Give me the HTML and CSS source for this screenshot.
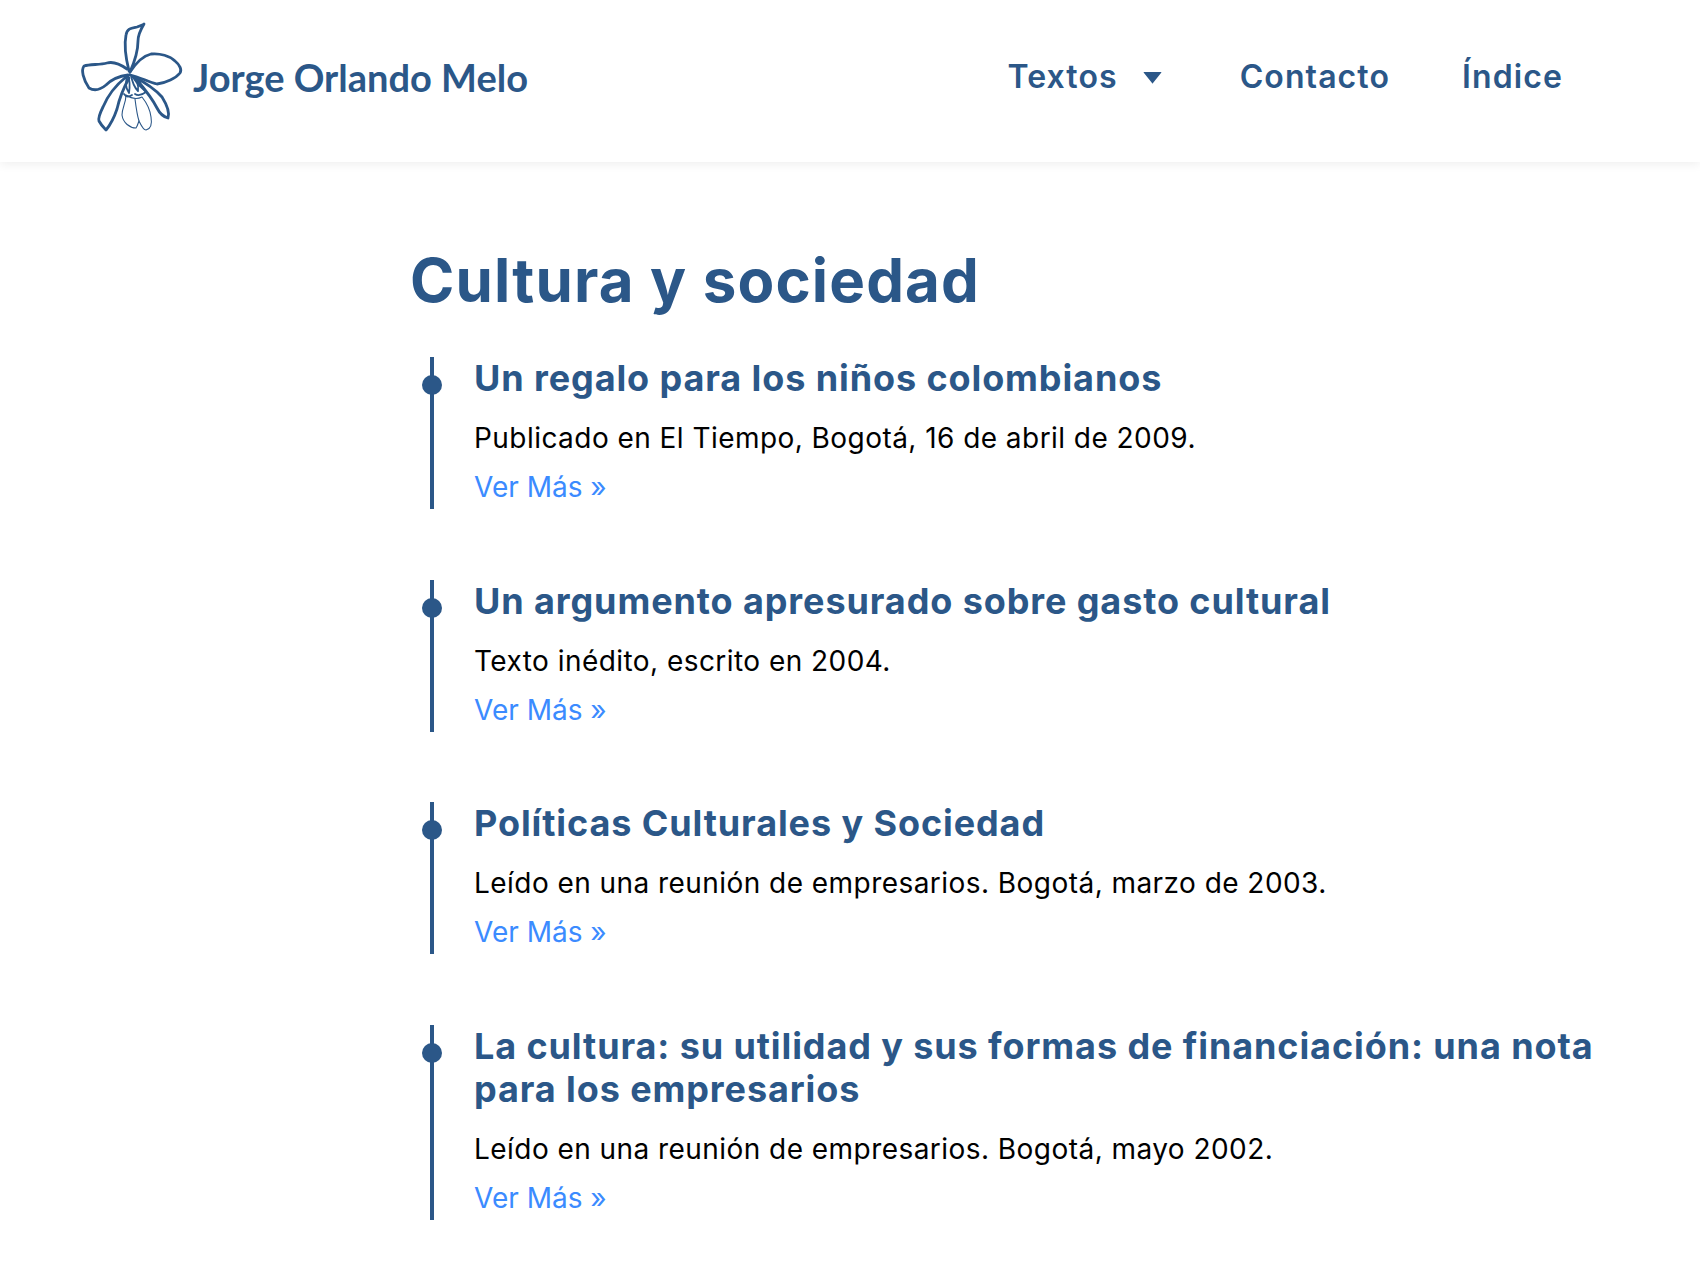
FILE: index.html
```html
<!DOCTYPE html>
<html lang="es">
<head>
<meta charset="utf-8">
<title>Cultura y sociedad</title>
<link rel="stylesheet" href="styles.css">
</head>
<body>
<header class="site-header">
  <a class="brand" href="#">
    <svg class="brand-logo" viewBox="0 0 120 120" fill="none" stroke="#2b5788" stroke-linecap="round" stroke-linejoin="round">
      <g stroke-width="2.8">
        <path d="M59 56C56 44 54 30 56 20C57 13 62 13 67 12C70 11 73 10 74 9C71 14 68 19 68 26C68 38 64 48 60 57"/>
        <path d="M60 57C66 48 72 41 81 39C90 38 100 41 105 46C110 50 112 55 110 58C106 63 96 68 87 69C78 67 70 62 60 60"/>
        <path d="M57 54C50 49 44 46 37 48C30 50 20 49 14 51C11 55 13 64 19 73C24 76 30 75 36 70C42 64 50 61 58 60"/>
        <path d="M56 62C46 70 38 80 33 92C30 98 28 103 29 106C31 110 34 113 36 115C41 109 44 103 47 94C49 85 53 74 59 63"/>
        <path d="M64 62C74 67 84 73 92 82C97 90 100 97 98 103C94 102 90 99 87 93C83 85 78 78 67 65"/>
      </g>
      <g stroke-width="1.8">
        <path d="M58 60C55 66 55 72 59 78C60 72 60 66 58 60Z"/>
        <path d="M61 60C62 66 64 72 68 76C69 70 66 64 61 60Z"/>
        <path d="M63 62C66 68 72 73 76 77C72 80 68 81 65 79"/>
        <path d="M54 79C56 82 59 82 62 80"/>
      </g>
      <g stroke-width="1.1">
        <path d="M56 80C56 88 52 93 52 100C53 108 60 113 66 113C68 110 68 108 69 106C71 110 73 115 76 115C81 114 82 108 81 102C80 94 76 87 72 82C68 84 62 84 56 80Z"/>
        <path d="M65 84C66 92 67 100 69 106"/>
      </g>
    </svg>
    <span class="brand-name">Jorge Orlando Melo</span>
  </a>
  <nav class="main-nav">
    <a class="nav-link nav-dropdown" href="#">Textos<svg class="caret" viewBox="0 0 19 12"><path d="M1 0H18Q19 0 18 1L10 11Q9.500 12 9 11L1 1Q0 0 1 0Z"/></svg></a>
    <a class="nav-link" href="#">Contacto</a>
    <a class="nav-link" href="#">Índice</a>
  </nav>
</header>
<main class="content">
  <h1 class="page-title">Cultura y sociedad</h1>
  <ul class="timeline">
    <li class="entry">
      <h2 class="entry-title">Un regalo para los niños colombianos</h2>
      <p class="entry-text">Publicado en El Tiempo, Bogotá, 16 de abril de 2009.</p>
      <a class="entry-more" href="#">Ver Más »</a>
    </li>
    <li class="entry">
      <h2 class="entry-title">Un argumento apresurado sobre gasto cultural</h2>
      <p class="entry-text">Texto inédito, escrito en 2004.</p>
      <a class="entry-more" href="#">Ver Más »</a>
    </li>
    <li class="entry">
      <h2 class="entry-title">Políticas Culturales y Sociedad</h2>
      <p class="entry-text">Leído en una reunión de empresarios. Bogotá, marzo de 2003.</p>
      <a class="entry-more" href="#">Ver Más »</a>
    </li>
    <li class="entry">
      <h2 class="entry-title">La cultura: su utilidad y sus formas de financiación: una nota para los empresarios</h2>
      <p class="entry-text">Leído en una reunión de empresarios. Bogotá, mayo 2002.</p>
      <a class="entry-more" href="#">Ver Más »</a>
    </li>
  </ul>
</main>
</body>
</html>
```

FILE: styles.css
```css
* { box-sizing: border-box; }
html, body { margin: 0; padding: 0; background: #fff; }
body { font-family: "Inter", "Liberation Sans", sans-serif; color: #000; min-height: 1268px; overflow: hidden; }
a { text-decoration: none; }

.site-header {
  height: 162px;
  display: flex;
  justify-content: space-between;
  align-items: flex-start;
  padding: 0 137px 0 70px;
  background: #fff;
  box-shadow: 0 2px 10px rgba(0, 0, 0, 0.07);
}
.brand { display: flex; align-items: flex-start; color: #2b5788; padding-top: 15px; }
.brand-logo { width: 120px; height: 120px; flex: none; margin-right: 3px; }
.brand-name {
  font-family: "Lato", sans-serif;
  font-weight: 700;
  font-size: 38px;
  line-height: 50px;
  margin-top: 37px;
}
.main-nav { display: flex; align-items: center; gap: 72px; padding-top: 56px; }
.nav-link {
  font-family: "Inter", sans-serif;
  font-weight: 600;
  font-size: 32px;
  line-height: 42px;
  letter-spacing: 1.1px;
  color: #2b5788;
  display: flex;
  align-items: center;
}
.caret { width: 19px; height: 12px; margin: 2px 6px 0 25px; fill: #2b5788; }

.content { padding: 82px 0 0 410px; }
.page-title {
  margin: 0 0 41px;
  font-family: "Inter", sans-serif;
  font-weight: 700;
  font-size: 60px;
  line-height: 72px;
  letter-spacing: 1.15px;
  color: #2b5788;
}
.timeline { list-style: none; margin: 0; padding: 0 0 0 20px; }
.entry {
  position: relative;
  border-left: 4px solid #2b5788;
  padding-left: 40px;
  margin-bottom: 70.7px;
  width: 1200px;
}
.entry::before {
  content: "";
  position: absolute;
  left: -12px;
  top: 18px;
  width: 20px;
  height: 20px;
  border-radius: 50%;
  background: #2b5788;
}
.entry-title {
  margin: 0 0 17px;
  font-family: "Inter", sans-serif;
  font-weight: 700;
  font-size: 36px;
  line-height: 43px;
  letter-spacing: 0.9px;
  color: #2b5788;
}
.entry-text {
  margin: 0 0 6px;
  font-size: 28px;
  line-height: 43px;
  letter-spacing: 0.45px;
  color: #000;
}
.entry-more {
  display: block;
  font-size: 28px;
  line-height: 43px;
  color: #3b8bff;
}
```
